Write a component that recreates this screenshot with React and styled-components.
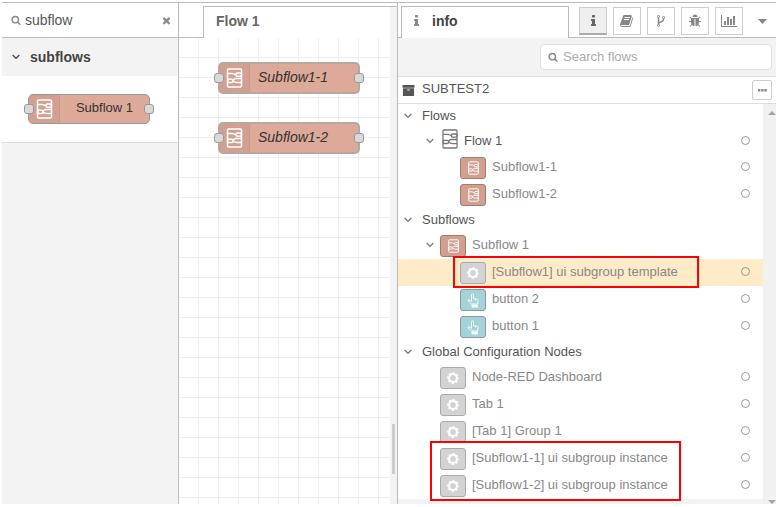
import React from "react";
import styled, { createGlobalStyle } from "styled-components";

const GlobalStyle = createGlobalStyle`
  * { box-sizing: border-box; }
  body { margin: 0; background: #fff; font-family: "Liberation Sans", Arial, sans-serif; font-size: 13px; color: #555; }
  button, input { font: inherit; color: inherit; margin: 0; padding: 0; }
  ul, h2, p { margin: 0; padding: 0; list-style: none; font-size: inherit; font-weight: inherit; }
  svg { display: block; flex: none; }
`;

const LINE = "#bbb";

const Editor = styled.div`
  display: grid;
  grid-template-columns: 177px minmax(0, 219fr) minmax(0, 378fr);
  height: calc(100vh - 5px);
  margin: 2px 0 3px 2px;
  border-top: 1px solid ${LINE};
`;

const Palette = styled.aside`
  display: flex;
  flex-direction: column;
  background: #f3f3f3;
  border-right: 1px solid ${LINE};
`;

const SearchRow = styled.label`
  display: flex;
  align-items: center;
  gap: 4px;
  height: 35px;
  padding: 0 6px 0 9px;
  background: #fff;
  border-bottom: 1px solid ${LINE};
  color: #888;
`;

const PaletteInput = styled.input`
  flex: 1;
  min-width: 0;
  border: 0;
  outline: 0;
  background: none;
  font-size: 14px;
  color: #555;
`;

const PlainButton = styled.button`
  display: flex;
  align-items: center;
  justify-content: center;
  border: 0;
  background: none;
  color: #888;
`;

const CategoryHeader = styled.button`
  display: flex;
  align-items: center;
  gap: 10px;
  height: 38px;
  padding: 0 10px;
  border: 0;
  background: none;
  font-size: 14px;
  font-weight: 700;
  color: #444;
`;

const CategoryBody = styled.div`
  height: 67px;
  padding: 18px 28px 0 26px;
  background: #fff;
  border-bottom: 1px solid #ddd;
`;

const NodeBox = styled.div`
  position: relative;
  display: flex;
  align-items: stretch;
  height: ${(p) => (p.$canvas ? 32 : 30)}px;
  border: ${(p) => (p.$canvas ? "2px solid #b8a8a2" : "1px solid #999")};
  border-radius: 5px;
  background: #dda998;
  font-size: ${(p) => (p.$canvas ? 14 : 13)}px;
  font-style: ${(p) => (p.$canvas ? "italic" : "normal")};
  color: #333;
`;

const NodeIcon = styled.span`
  display: flex;
  align-items: center;
  justify-content: center;
  width: ${(p) => (p.$canvas ? 30 : 31)}px;
  border-right: 1px solid #c8988a;
  border-radius: 3px 0 0 3px;
  background: #d2a091;
  color: #fff;
`;

const NodeLabel = styled.span`
  flex: 1;
  padding-left: ${(p) => (p.$canvas ? 8 : 0)}px;
  line-height: 26px;
  text-align: ${(p) => (p.$canvas ? "left" : "center")};
`;

const Port = styled.i`
  position: absolute;
  top: calc(50% - 5px);
  ${(p) => p.$side}: ${(p) => (p.$canvas ? -6 : -5)}px;
  width: 10px;
  height: 10px;
  border: 1px solid #999;
  border-radius: 3px;
  background: #d9d9d9;
`;

const Workspace = styled.main`
  display: flex;
  flex-direction: column;
  border-right: 1px solid ${LINE};
`;

const WorkspaceTabs = styled.div`
  display: flex;
  height: 35px;
  padding-top: 3px;
`;

const TabGap = styled.span`
  width: ${(p) => p.$width}px;
  border-bottom: 1px solid ${LINE};
`;

const FlowTab = styled.button`
  flex: 1;
  padding: 0 0 3px 12px;
  border: solid ${LINE};
  border-width: 1px 0 0 1px;
  background: #fff;
  font-size: 14px;
  font-weight: 700;
  text-align: left;
  color: #666;
`;

const TabEdge = styled.span`
  width: 7px;
  border-top: 1px solid ${LINE};
  background: #f3f3f3;
`;

const CanvasRow = styled.div`
  display: flex;
  flex: 1;
`;

const Canvas = styled.div`
  position: relative;
  flex: 1;
  background:
    linear-gradient(to right, transparent 19px, #eee 19px) 0 0 / 20px 20px,
    linear-gradient(to bottom, #fff 19px, #eee 19px) 0 0 / 20px 20px;
`;

const Placed = styled.div`
  position: absolute;
  left: 39px;
  top: ${(p) => p.$top}px;
  width: 142px;
`;

const Scrollbar = styled.div`
  width: 7px;
  padding: 386px 2px 0;
  background: #f3f3f3;
`;

const Thumb = styled.div`
  width: 3px;
  height: 50px;
  background: #ccc;
`;

const Sidebar = styled.aside`
  display: flex;
  flex-direction: column;
  min-width: 0;
  background: #f3f3f3;
`;

const SidebarTabs = styled.div`
  display: flex;
  height: 35px;
  padding-top: 3px;
  background: #fff;
`;

const InfoTab = styled.button`
  display: flex;
  align-items: center;
  gap: 13px;
  flex: 1;
  padding: 0 0 3px 12px;
  border: solid ${LINE};
  border-width: 1px 1px 0;
  background: #fff;
  font-size: 14px;
  font-weight: 700;
  color: #444;
  svg { color: #888; }
`;

const TabButtons = styled.div`
  display: flex;
  gap: 6px;
  padding: 1px 0 0 10px;
  border-bottom: 1px solid ${LINE};
`;

const IconButton = styled.button`
  display: flex;
  align-items: center;
  justify-content: center;
  width: 28px;
  height: 28px;
  border: 1px solid #ccc;
  border-bottom: ${(p) => (p.$active ? "2px solid #aaa" : "1px solid #ccc")};
  background: ${(p) => (p.$active ? "#efefef" : "#fff")};
  color: ${(p) => (p.$active ? "#666" : "#888")};
`;

const MenuButton = styled(PlainButton)`
  width: 27px;
  height: 28px;
`;

const FilterBar = styled.div`
  display: flex;
  justify-content: flex-end;
  height: 39px;
  padding: 6px 4px;
  border-bottom: 1px solid #ddd;
`;

const FilterBox = styled.label`
  display: flex;
  align-items: center;
  gap: 5px;
  width: 232px;
  height: 26px;
  padding: 0 7px 1px;
  border: 1px solid #ddd;
  border-radius: 4px;
  background: #fff;
  color: #888;
`;

const FilterInput = styled(PaletteInput)`
  font-size: 13px;
  &::placeholder { color: #aaa; opacity: 1; }
`;

const ProjectRow = styled.div`
  display: flex;
  align-items: center;
  gap: 7px;
  height: 27px;
  padding: 0 4px;
  background: #fff;
  border-bottom: 1px solid #ddd;
`;

const ProjectName = styled.h2`
  flex: 1;
  line-height: 24px;
  padding-bottom: 2px;
`;

const MoreButton = styled(IconButton)`
  width: 20px;
  height: 20px;
  border-radius: 2px;
`;

const TreeArea = styled.div`
  display: flex;
  flex: 1;
`;

const Tree = styled.ul`
  flex: 1;
  min-width: 0;
  align-self: flex-start;
  background: #fff;
`;

const TreeRow = styled.li`
  position: relative;
  display: flex;
  align-items: flex-start;
  height: ${(p) => p.$height}px;
  padding: 0 13px 0 ${(p) => p.$indent}px;
  background: ${(p) => (p.$selected ? "#ffebc7" : "none")};
  color: ${(p) => (p.$muted ? "#888" : "#555")};
`;

const Toggle = styled(PlainButton)`
  width: 20px;
  height: ${(p) => p.$height}px;
  color: #777;
`;

const TreeLabel = styled.span`
  flex: 1;
  padding-left: ${(p) => p.$gap}px;
  line-height: ${(p) => p.$line}px;
  white-space: nowrap;
`;

const palette = {
  subflow: ["#d2a091", "#a87a6c"],
  config: ["#d3d3d3", "#aaa"],
  button: ["#a4d3d7", "#8c9a9c"],
};

const TypeBadge = styled.span`
  display: flex;
  align-items: center;
  justify-content: center;
  width: 26px;
  height: 22px;
  margin-top: 3px;
  border: 1px solid ${(p) => palette[p.$type][1]};
  border-radius: 3px;
  background: ${(p) => palette[p.$type][0]};
  color: #fff;
`;

const FlowMark = styled.span`
  padding: 1px 1px 0 2px;
  color: #777;
`;

const StatusButton = styled.button`
  width: 9px;
  height: 9px;
  margin-top: 8px;
  border: 1px solid #999;
  border-radius: 50%;
  background: none;
`;

const Highlight = styled.div`
  position: absolute;
  z-index: 1;
  left: ${(p) => p.$left}px;
  top: ${(p) => p.$top}px;
  width: ${(p) => p.$width}px;
  height: ${(p) => p.$height}px;
  border: 2px solid #f00;
  pointer-events: none;
`;

const TreeScroll = styled.div`
  display: flex;
  flex-direction: column;
  justify-content: space-between;
  align-items: center;
  width: 13px;
  padding: 7px 0 0 4px;
  background: #f1f1f1;
  color: #a3a3a3;
`;

const shapes = {
  info: [640, "M640 1344v128q0 26-19 45t-45 19h-512q-26 0-45-19t-19-45v-128q0-26 19-45t45-19h64v-384h-64q-26 0-45-19t-19-45v-128q0-26 19-45t45-19h384q26 0 45 19t19 45v576h64q26 0 45 19t19 45zm-128-1152v192q0 26-19 45t-45 19h-256q-26 0-45-19t-19-45v-192q0-26 19-45t45-19h256q26 0 45 19t19 45z"],
  book: [1792, "M1639 478q40 57 18 129l-275 906q-19 64-76.5 107.5t-122.5 43.5h-923q-77 0-148.5-53.5t-99.5-131.5q-24-67-2-127 0-4 3-27t4-37q1-8-3-21.5t-3-19.5q2-11 8-21t16.5-23.5 16.5-23.5q23-38 45-91.5t30-91.5q3-10 .5-30t-.5-28q3-11 17-28t17-23q21-36 42-92t25-90q1-9-2.5-32t.5-28q4-13 22-30.5t22-22.5q19-26 42.5-84.5t27.5-96.5q1-8-3-25.5t-2-26.5q2-8 9-18t18-23 17-21q8-12 16.5-30.5t15-35 16-36 19.5-32 26.5-23.5 36-11.5 47.5 5.5l-1 3q38-9 51-9h761q74 0 114 56t18 130l-274 906q-36 119-71.5 153.5t-128.5 34.5h-869q-27 0-38 15-11 16-1 43 24 70 144 70h923q29 0 56-15.5t35-41.5l300-987q7-22 5-57 38 15 59 43zm-1064 2q-4 13 2 22.5t20 9.5h608q13 0 25.5-9.5t16.5-22.5l21-64q4-13-2-22.5t-20-9.5h-608q-13 0-25.5 9.5t-16.5 22.5zm-83 256q-4 13 2 22.5t20 9.5h608q13 0 25.5-9.5t16.5-22.5l21-64q4-13-2-22.5t-20-9.5h-608q-13 0-25.5 9.5t-16.5 22.5z"],
  fork: [1792, "M672 1472q0-40-28-68t-68-28-68 28-28 68 28 68 68 28 68-28 28-68zm0-1152q0-40-28-68t-68-28-68 28-28 68 28 68 68 28 68-28 28-68zm640 128q0-40-28-68t-68-28-68 28-28 68 28 68 68 28 68-28 28-68zm96 0q0 52-26 96.5t-70 69.5q-2 287-226 414-67 38-203 81-128 40-169.5 71t-41.5 100v26q44 25 70 69.5t26 96.5q0 80-56 136t-136 56-136-56-56-136q0-52 26-96.5t70-69.5v-820q-44-25-70-69.5t-26-96.5q0-80 56-136t136-56 136 56 56 136q0 52-26 96.5t-70 69.5v497q54-26 154-57 55-17 87.5-29.5t70.5-31 59-39.5 40.5-51 28-69.5 8.5-91.5q-44-25-70-69.5t-26-96.5q0-80 56-136t136-56 136 56 56 136z"],
  bug: [1792, "M1696 960q0 26-19 45t-45 19h-224q0 171-67 290l208 209q19 19 19 45t-19 45q-18 19-45 19t-45-19l-198-197q-5 5-15 13t-42 28.5-65 36.5-82 29-97 13v-896h-128v896q-51 0-101.5-13.5t-87-33-66-39-43.5-32.5l-15-14-183 207q-20 21-48 21-24 0-43-16-19-18-20.5-44.5t15.5-46.5l202-227q-58-114-58-274h-224q-26 0-45-19t-19-45 19-45 45-19h224v-294l-173-173q-19-19-19-45t19-45 45-19 45 19l173 173h844l173-173q19-19 45-19t45 19 19 45-19 45l-173 173v294h224q26 0 45 19t19 45zm-480-576h-640q0-133 93.5-226.5t226.5-93.5 226.5 93.5 93.5 226.5z"],
  chart: [2048, "M640 896v512h-256v-512h256zm384-512v1024h-256v-1024h256zm1024 1152v128h-2048v-1536h128v1408h1920zm-640-896v768h-256v-768h256zm384-384v1152h-256v-1152h256z"],
  search: [1792, "M1216 832q0-185-131.5-316.5t-316.5-131.5-316.5 131.5-131.5 316.5 131.5 316.5 316.5 131.5 316.5-131.5 131.5-316.5zm512 832q0 52-38 90t-90 38q-54 0-90-38l-343-342q-179 124-399 124-143 0-273.5-55.5t-225-150-150-225-55.5-273.5 55.5-273.5 150-225 225-150 273.5-55.5 273.5 55.5 225 150 150 225 55.5 273.5q0 220-124 399l343 343q37 37 37 90z"],
  times: [1792, "M1490 1322q0 40-28 68l-136 136q-28 28-68 28t-68-28l-294-294-294 294q-28 28-68 28t-68-28l-136-136q-28-28-28-68t28-68l294-294-294-294q-28-28-28-68t28-68l136-136q28-28 68-28t68 28l294 294 294-294q28-28 68-28t68 28l136 136q28 28 28 68t-28 68l-294 294 294 294q28 28 28 68z"],
  archive: [1792, "M1088 832q0-26-19-45t-45-19h-256q-26 0-45 19t-19 45 19 45 45 19h256q26 0 45-19t19-45zm576-192v960q0 26-19 45t-45 19h-1408q-26 0-45-19t-19-45v-960q0-26 19-45t45-19h1408q26 0 45 19t19 45zm64-448v256q0 26-19 45t-45 19h-1536q-26 0-45-19t-19-45v-256q0-26 19-45t45-19h1536q26 0 45 19t19 45z"],
};

function Icon({ name, size = 14 }) {
  const [w, d] = shapes[name];
  return (
    <svg width={Math.round((size * w) / 1792)} height={size} viewBox={`0 0 ${w} 1792`} fill="currentColor" aria-hidden="true">
      <path d={d} />
    </svg>
  );
}

const Chevron = () => (
  <svg width="8" height="6" viewBox="0 0 8 6" fill="none" stroke="currentColor" strokeWidth="1.3" aria-hidden="true">
    <path d="M.7 1 4 4.4 7.3 1" />
  </svg>
);

const Triangle = ({ up, width = 8, height = 4 }) => (
  <svg width={width} height={height} viewBox="0 0 8 4" preserveAspectRatio="none" fill="currentColor" aria-hidden="true">
    <path d={up ? "M0 4 4 0l4 4z" : "M0 0h8L4 4z"} />
  </svg>
);

const Dots = () => (
  <svg width="9" height="3" viewBox="0 0 9 3" fill="currentColor" aria-hidden="true">
    <path d="M0 0h2.4v2.4H0zM3.2 0h2.4v2.4H3.2zM6.4 0h2.4v2.4H6.4z" />
  </svg>
);

const SubflowIcon = ({ width, height, stroke = 1.5 }) => (
  <svg width={width} height={height} viewBox="0 0 16 20" fill="none" stroke="currentColor" strokeWidth={stroke} aria-hidden="true">
    <rect x="1" y="1" width="14" height="18" rx="1" />
    <path d="M1 5.4h4.5Q7.500 5.400 9.500 7M6.500 13Q8.500 14.600 10.500 14.600H15M6.500 12.400Q8 10.500 9 10.500H15" />
    <rect x="9.500" y="5" width="5.500" height="3.200" rx="1.200" />
    <rect x="1" y="11.300" width="5.500" height="3.200" rx="1.200" />
  </svg>
);

const GearIcon = () => (
  <svg width="12" height="12" viewBox="0 0 12 12" fill="none" stroke="currentColor" aria-hidden="true">
    <circle cx="6" cy="6" r="3.9" strokeWidth="2" />
    <circle cx="6" cy="6" r="5.1" strokeWidth="1.6" strokeDasharray="2.2 1.805" strokeDashoffset="1.1" />
  </svg>
);

const HandIcon = () => (
  <svg width="12" height="15" viewBox="0 0 12 15" fill="none" stroke="currentColor" strokeWidth=".9" aria-hidden="true">
    <path d="M4.500 8.500V1.800a1 1 0 0 1 2 0V5.500l4 .8q.9.3.7 1.400l-.7 3.300H4.400L1 7.800q-.3-1 .8-1.100l2.700 1.600M8.500 6v1.500" />
    <path d="M5 12h5.500v2H5z" fill="currentColor" />
  </svg>
);

const FlowNode = ({ label, canvas }) => (
  <NodeBox $canvas={canvas}>
    <NodeIcon $canvas={canvas}><SubflowIcon width={17} height={20} /></NodeIcon>
    <NodeLabel $canvas={canvas}>{label}</NodeLabel>
    <Port $side="left" $canvas={canvas} />
    <Port $side="right" $canvas={canvas} />
  </NodeBox>
);

const rows = [
  { label: "Flows", kind: "section" },
  { label: "Flow 1", kind: "flow" },
  { label: "Subflow1-1", type: "subflow", indent: 62 },
  { label: "Subflow1-2", type: "subflow", indent: 62 },
  { label: "Subflows", kind: "section" },
  { label: "Subflow 1", type: "subflow", indent: 22, open: true },
  { label: "[Subflow1] ui subgroup template", type: "config", indent: 62, selected: true, mark: [55, -3, 246, 32] },
  { label: "button 2", type: "button", indent: 62 },
  { label: "button 1", type: "button", indent: 62 },
  { label: "Global Configuration Nodes", kind: "section" },
  { label: "Node-RED Dashboard", type: "config", indent: 42 },
  { label: "Tab 1", type: "config", indent: 42 },
  { label: "[Tab 1] Group 1", type: "config", indent: 42 },
  { label: "[Subflow1-1] ui subgroup instance", type: "config", indent: 42, mark: [32, -4, 251, 60] },
  { label: "[Subflow1-2] ui subgroup instance", type: "config", indent: 42 },
];

const badgeIcons = {
  subflow: <SubflowIcon width={11} height={14} stroke={1.4} />,
  config: <GearIcon />,
  button: <HandIcon />,
};

function TreeItem({ item }) {
  if (item.kind === "section") {
    return (
      <TreeRow $height={24} $indent={0}>
        <Toggle $height={24} aria-label={`Collapse ${item.label}`}><Chevron /></Toggle>
        <TreeLabel $gap={4} $line={23}>{item.label}</TreeLabel>
      </TreeRow>
    );
  }
  if (item.kind === "flow") {
    return (
      <TreeRow $height={26} $indent={22}>
        <Toggle $height={25} aria-label={`Collapse ${item.label}`}><Chevron /></Toggle>
        <FlowMark><SubflowIcon width={16} height={20} stroke={1.3} /></FlowMark>
        <TreeLabel $gap={5} $line={25}>{item.label}</TreeLabel>
        <StatusButton aria-label={`Toggle ${item.label}`} />
      </TreeRow>
    );
  }
  return (
    <TreeRow $height={27} $indent={item.indent} $selected={item.selected} $muted>
      {item.open && <Toggle $height={25} aria-label={`Collapse ${item.label}`}><Chevron /></Toggle>}
      <TypeBadge $type={item.type}>{badgeIcons[item.type]}</TypeBadge>
      <TreeLabel $gap={6} $line={25}>{item.label}</TreeLabel>
      {!item.open && <StatusButton aria-label={`Toggle ${item.label}`} />}
      {item.mark && <Highlight $left={item.mark[0]} $top={item.mark[1]} $width={item.mark[2]} $height={item.mark[3]} />}
    </TreeRow>
  );
}

export default function App() {
  return (
    <>
      <GlobalStyle />
      <Editor>
        <Palette>
          <SearchRow>
            <Icon name="search" size={10} />
            <PaletteInput aria-label="Filter nodes" defaultValue="subflow" />
            <PlainButton aria-label="Clear filter"><Icon name="times" size={11} /></PlainButton>
          </SearchRow>
          <CategoryHeader><Chevron />subflows</CategoryHeader>
          <CategoryBody><FlowNode label="Subflow 1" /></CategoryBody>
        </Palette>

        <Workspace>
          <WorkspaceTabs>
            <TabGap $width={24} />
            <FlowTab>Flow 1</FlowTab>
            <TabEdge />
          </WorkspaceTabs>
          <CanvasRow>
            <Canvas>
              <Placed $top={24}><FlowNode label="Subflow1-1" canvas /></Placed>
              <Placed $top={84}><FlowNode label="Subflow1-2" canvas /></Placed>
            </Canvas>
            <Scrollbar><Thumb /></Scrollbar>
          </CanvasRow>
        </Workspace>

        <Sidebar>
          <SidebarTabs>
            <TabGap $width={3} />
            <InfoTab><Icon name="info" size={14} />info</InfoTab>
            <TabButtons>
              <IconButton $active aria-label="Information"><Icon name="info" /></IconButton>
              <IconButton aria-label="Help"><Icon name="book" /></IconButton>
              <IconButton aria-label="History"><Icon name="fork" /></IconButton>
              <IconButton aria-label="Debug"><Icon name="bug" /></IconButton>
              <IconButton aria-label="Dashboard"><Icon name="chart" /></IconButton>
              <MenuButton aria-label="More tabs"><Triangle width={9} height={5} /></MenuButton>
            </TabButtons>
          </SidebarTabs>
          <FilterBar>
            <FilterBox>
              <Icon name="search" size={10} />
              <FilterInput placeholder="Search flows" aria-label="Search flows" />
            </FilterBox>
          </FilterBar>
          <ProjectRow>
            <Icon name="archive" size={13} />
            <ProjectName>SUBTEST2</ProjectName>
            <MoreButton aria-label="Project options"><Dots /></MoreButton>
          </ProjectRow>
          <TreeArea>
            <Tree>
              {rows.map((item) => <TreeItem key={item.label} item={item} />)}
            </Tree>
            <TreeScroll><Triangle up /><Triangle /></TreeScroll>
          </TreeArea>
        </Sidebar>
      </Editor>
    </>
  );
}
